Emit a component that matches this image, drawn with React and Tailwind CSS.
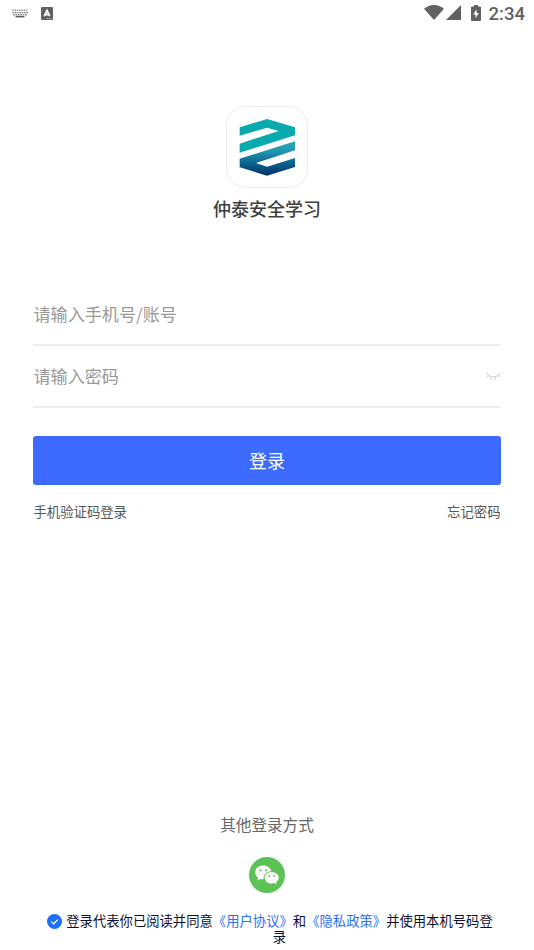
import { useState } from "react";

const StatusBar = () => {
  return (
    <div className="flex h-[27px] items-center justify-between pl-3 pr-[9px] text-[#616161]">
      <div className="flex items-center gap-[13px]">
        <svg className="h-[9px] w-4" viewBox="0 0 16 9" fill="none" stroke="currentColor">
          <path d="M0.5 1.2H16" strokeWidth="1.4" strokeDasharray="1.4 0.8" opacity="0.7" />
          <path d="M0.5 3.6H16" strokeWidth="1.4" strokeDasharray="1.6 0.7" opacity="0.8" />
          <path d="M1 5.8H15.5" strokeWidth="1.4" strokeDasharray="1.8 0.6" opacity="0.7" />
          <path d="M3.5 7.7H12.5" strokeWidth="1.5" />
        </svg>
        <svg className="h-[13px] w-[12px]" viewBox="0 0 12 13">
          <rect width="12" height="13" rx="1" fill="currentColor" />
          <path d="M3.2 9.2L6 3.4L8.8 9.2M4.2 7.6H7.8" fill="none" stroke="#fff" strokeWidth="1.7" />
          <path d="M6 11.6H11" stroke="#fff" strokeWidth="0.7" strokeDasharray="1 0.7" />
        </svg>
      </div>
      <div className="flex items-center">
        <svg className="mb-[2px] h-[15px] w-5" viewBox="0 0 20 16" preserveAspectRatio="none" fill="currentColor">
          <path d="M0 4.1C5.6-1.3 14.4-1.3 20 4.1L10 16Z" />
        </svg>
        <svg className="mb-[2px] ml-[2px] h-[15px] w-[15px]" viewBox="0 0 15 15" fill="currentColor">
          <path d="M15 0V15H0Z" />
        </svg>
        <svg className="mb-[2px] ml-[10px] h-[16px] w-[10px]" viewBox="0 0 10 17" preserveAspectRatio="none">
          <path d="M3 0H7V1.6H9Q10 1.6 10 2.6V16Q10 17 9 17H1Q0 17 0 16V2.6Q0 1.6 1 1.6H3Z" fill="currentColor" />
          <path d="M5.6 4.5L2.2 10H4.5V14L7.9 8.5H5.6Z" fill="#fff" />
        </svg>
        <span className="ml-2 pt-[2px] font-['Roboto',sans-serif] text-[18.5px] leading-none font-medium">2:34</span>
      </div>
    </div>
  );
};

const Logo = () => {
  return (
    <svg className="mr-px h-[82px] w-[82px]" viewBox="0 0 246 246">
      <defs>
        <linearGradient id="lower" x1="0" y1="0" x2="0" y2="1">
          <stop offset="0" stopColor="#2aa5b8" />
          <stop offset="0.3" stopColor="#2296ad" />
          <stop offset="0.62" stopColor="#0c6490" />
          <stop offset="1" stopColor="#043263" />
        </linearGradient>
      </defs>
      <rect x="1.5" y="1.5" width="243" height="243" rx="58" fill="#fff" stroke="#ebebeb" strokeWidth="3" />
      <path d="M41 64L123 39L207 64V88L41 140V113L158 75L123 65L41 89Z" fill="#0aa8af" />
      <path d="M207 106V133L90 171L123 182L207 156V183L123 209L41 184V158Z" fill="url(#lower)" />
    </svg>
  );
};

const ClosedEye = () => {
  return (
    <svg className="h-[9px] w-[15px]" viewBox="0 0 15 9" fill="none" stroke="#d2d2d2" strokeWidth="1.1">
      <path d="M0.5 0.8C3.5 6 11.5 6 14.5 0.8M2.6 3.4L0.9 5.6M5.7 4.8L5.1 7.9M9.3 4.8L9.9 7.9M12.4 3.4L14.1 5.6" />
    </svg>
  );
};

const WechatIcon = () => {
  return (
    <svg className="h-9 w-9" viewBox="0 0 36 36">
      <circle cx="18" cy="18" r="18" fill="#5dc255" />
      <path
        d="M14.2 8.6C9.6 8.6 6.2 11.6 6.2 15.4C6.2 17.6 7.3 19.4 9.1 20.7L8.4 23.6L11.4 21.9C12.4 22.2 13.4 22.3 14.6 22.2C14.2 17.5 17.7 14.3 22.3 14.2C21.6 10.9 18.2 8.6 14.2 8.6Z"
        fill="#fff"
      />
      <path
        d="M22.6 14.9C18.7 14.9 15.7 17.5 15.7 20.7C15.7 24 18.7 26.5 22.6 26.5C23.4 26.5 24.3 26.4 25.1 26.1L27.6 27.4L27 25.1C28.7 24 29.7 22.4 29.7 20.7C29.7 17.5 26.5 14.9 22.6 14.9Z"
        fill="#fff"
      />
      <g fill="#5dc255">
        <circle cx="11.6" cy="13.3" r="1.1" />
        <circle cx="17" cy="13.3" r="1.1" />
        <circle cx="20.3" cy="18.9" r="0.9" />
        <circle cx="25" cy="18.9" r="0.9" />
      </g>
    </svg>
  );
};

const App = () => {
  const [account, setAccount] = useState("");
  const [password, setPassword] = useState("");
  const [agreed, setAgreed] = useState(true);

  return (
    <div className="flex h-[950px] w-[534px] flex-col overflow-hidden bg-white font-['Noto_Sans_CJK_SC',sans-serif]">
      <StatusBar />

      <div className="mt-[79px] flex flex-col items-center">
        <Logo />
        <h1 className="mt-[7px] text-[18px] leading-[26px] font-medium text-[#404040]">仲泰安全学习</h1>
      </div>

      <form className="mt-[63px] px-[33px]" onSubmit={(e) => e.preventDefault()}>
        <div className="flex h-[62px] items-center border-b-2 border-[#ededed]">
          <input
            className="w-full pl-[0.5px] text-[17.1px] leading-6 outline-none placeholder:text-[#999]"
            placeholder="请输入手机号/账号"
            value={account}
            onChange={(e) => setAccount(e.target.value)}
          />
        </div>
        <div className="flex h-[62px] items-center border-b-2 border-[#ededed]">
          <input
            type="password"
            className="w-full pl-[0.5px] text-[17.1px] leading-6 outline-none placeholder:text-[#999]"
            placeholder="请输入密码"
            value={password}
            onChange={(e) => setPassword(e.target.value)}
          />
          <ClosedEye />
        </div>
        <button className="mt-7 h-[49px] w-full rounded-[3px] bg-[#3d6bff] text-[18px] text-white">登录</button>
        <div className="mt-[17px] flex justify-between pl-[0.5px] pr-[0.5px] text-[13.35px] leading-5 text-[#555]">
          <span>手机验证码登录</span>
          <span>忘记密码</span>
        </div>
      </form>

      <div className="mt-auto flex flex-col items-center">
        <p className="text-[15.6px] leading-6 text-[#666]">其他登录方式</p>
        <button className="mt-[21px]">
          <WechatIcon />
        </button>
      </div>

      <div className="mt-5 flex h-[37px] items-start pl-[47px]">
        <button className="mt-px" onClick={() => setAgreed(!agreed)}>
          <svg className="h-[15px] w-[15px]" viewBox="0 0 15 15">
            <circle cx="7.5" cy="7.5" r="7.5" fill={agreed ? "#1e6ff5" : "#ccc"} />
            <path d="M4.2 7.6L6.6 9.8L10.9 5.6" fill="none" stroke="#fff" strokeWidth="1.2" />
          </svg>
        </button>
        <p className="ml-[3.5px] w-[428px] text-center text-[13.34px] leading-4 text-[#0f0f2d]">
          登录代表你已阅读并同意<span className="inline-block text-[#2b71f6]">《用户协议》</span>和
          <span className="inline-block text-[#2b71f6]">《隐私政策》</span>并使用本机号码登录
        </p>
      </div>
    </div>
  );
};

export default App;
